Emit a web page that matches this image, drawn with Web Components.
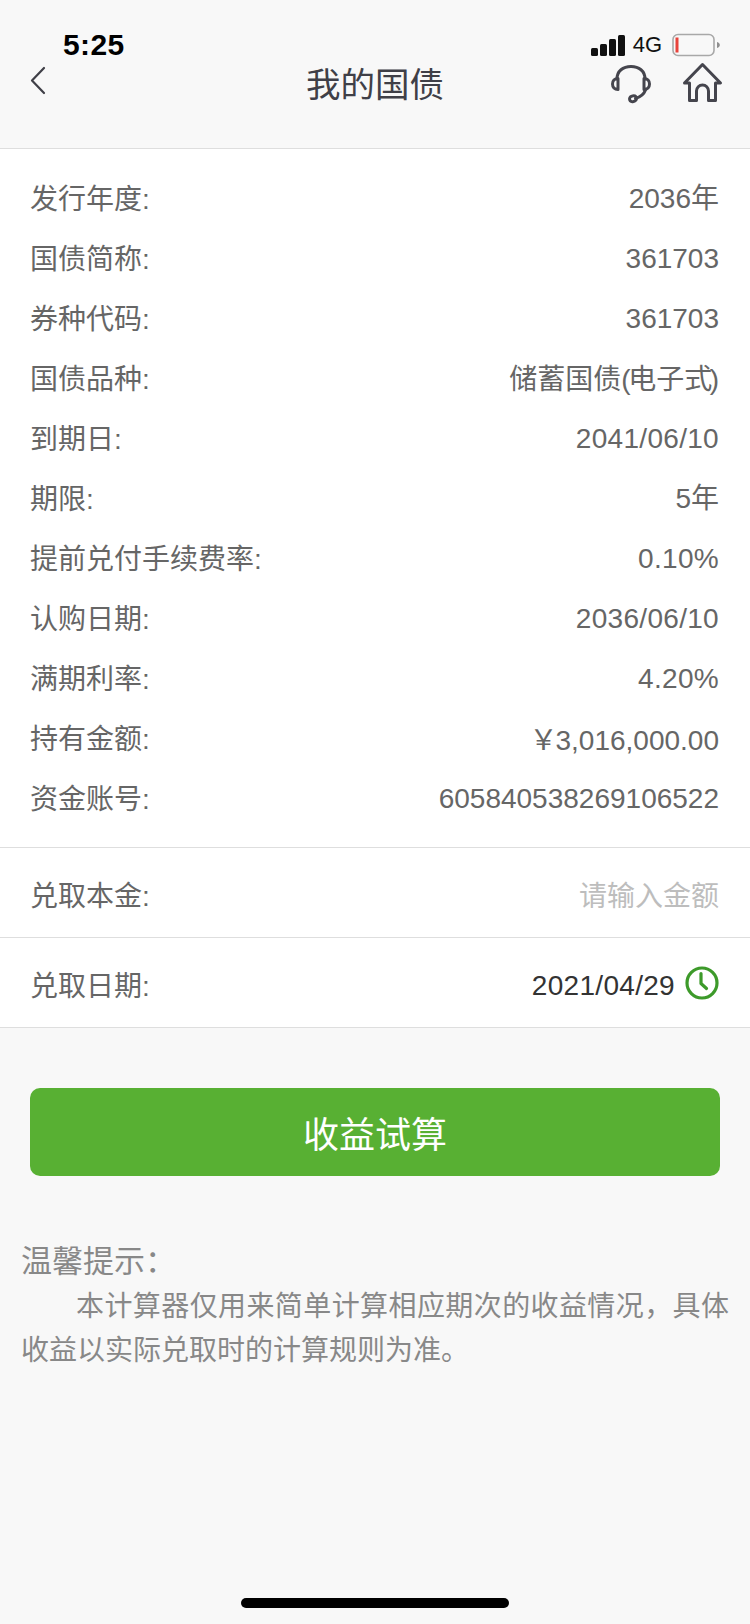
<!DOCTYPE html>
<html lang="zh">
<head>
<meta charset="utf-8">
<title>我的国债</title>
<style>
  html, body { margin: 0; padding: 0; background: #f8f8f8; }
  body {
    width: 750px;
    height: 1624px;
    overflow: hidden;
    display: flex;
    flex-direction: column;
    font-family: "Liberation Sans", "Noto Sans CJK SC", sans-serif;
  }
  .yen { font-family: "Noto Sans CJK SC", sans-serif; margin-right: -2px; }
  .tight { letter-spacing: -2.500px; }
</style>
</head>
<body>
<status-bar time="5:25"></status-bar>
<nav-bar title="我的国债"></nav-bar>
<info-list>
  <info-row label="发行年度:">2036年</info-row>
  <info-row label="国债简称:">361703</info-row>
  <info-row label="券种代码:">361703</info-row>
  <info-row label="国债品种:" cjk>储蓄国债<span class="tight">(</span>电子<span class="tight">式</span>)</info-row>
  <info-row label="到期日:" spaced>2041/06/10</info-row>
  <info-row label="期限:">5年</info-row>
  <info-row label="提前兑付手续费率:" spaced>0.10%</info-row>
  <info-row label="认购日期:" spaced>2036/06/10</info-row>
  <info-row label="满期利率:" spaced>4.20%</info-row>
  <info-row label="持有金额:"><span class="yen">￥</span>3,016,000.00</info-row>
  <info-row label="资金账号:">605840538269106522</info-row>
</info-list>
<form-row label="兑取本金:" placeholder="请输入金额"></form-row>
<form-row label="兑取日期:" value="2021/04/29" clock></form-row>
<main-button>收益试算</main-button>
<tip-note title="温馨提示：">本计算器仅用来简单计算相应期次的收益情况，具体收益以实际兑取时的计算规则为准。</tip-note>
<home-bar></home-bar>

<script>
class StatusBar extends HTMLElement {
  constructor() {
    super();
    this.attachShadow({ mode: "open" });
  }
  connectedCallback() {
    this.shadowRoot.innerHTML = `
    <style>
      :host { display: flex; justify-content: space-between; align-items: center; height: 62px; padding: 28px 30px 0 63px; box-sizing: border-box; color: #000; }
      .time { font-size: 30px; font-weight: 700; line-height: 34px; letter-spacing: .4px; }
      .right { display: flex; align-items: center; }
      .net { font-size: 22px; line-height: 24px; margin: 0 10px 0 8px; color: #111; }
      svg { display: block; }
    </style>
    <span class="time">${this.getAttribute("time")}</span>
    <div class="right">
      <svg width="34" height="22" viewBox="0 0 34 22">
        <rect x="0" y="14" width="7" height="8" rx="1.5" fill="#111"/>
        <rect x="9" y="10" width="7" height="12" rx="1.5" fill="#111"/>
        <rect x="18" y="5" width="7" height="17" rx="1.5" fill="#111"/>
        <rect x="27" y="1" width="7" height="21" rx="1.5" fill="#111"/>
      </svg>
      <span class="net">4G</span>
      <svg width="48" height="24" viewBox="0 0 48 24">
        <rect x="1" y="1.5" width="41" height="21" rx="5" fill="none" stroke="#a8a8a8" stroke-width="1.6"/>
        <rect x="3.500" y="4.500" width="3" height="15" fill="#e8433b"/>
        <path d="M45 9c2 .6 2.800 1.600 2.800 3s-.8 2.400-2.800 3z" fill="#8e8e8e"/>
      </svg>
    </div>`;
  }
}

class NavBar extends HTMLElement {
  constructor() {
    super();
    this.attachShadow({ mode: "open" });
  }
  connectedCallback() {
    this.shadowRoot.innerHTML = `
    <style>
      :host { display: grid; grid-template-columns: 1fr auto 1fr; align-items: flex-start; height: 87px; padding: 0 27px; box-sizing: border-box; border-bottom: 1px solid #dedede; }
      h1 { margin: 0; padding-top: 2px; font-size: 34.500px; font-weight: 400; line-height: 42px; color: #3f3f47; }
      .back { justify-self: start; margin: 4px 0 0 3px; }
      .tools { justify-self: end; display: flex; gap: 29px; }
      svg { display: block; }
    </style>
    <svg class="back" width="16" height="30" viewBox="0 0 16 30"><path d="M14 2 2 14.500 14 27" fill="none" stroke="#3f3f47" stroke-width="2.200" stroke-linecap="round" stroke-linejoin="round"/></svg>
    <h1>${this.getAttribute("title")}</h1>
    <div class="tools">
      <svg width="42" height="42" viewBox="0 0 42 42" fill="none" stroke="#45454d" stroke-width="3" stroke-linecap="round" stroke-linejoin="round">
        <path d="M7 17C7 9 13 4.500 21 4.500S35 9 35 17"/>
        <path d="M8 16.500c-3.500 0-5.500 2.500-5.500 5.500s2 5.500 5.500 5.500z"/>
        <path d="M34 16.500c3.500 0 5.500 2.500 5.500 5.500s-2 5.500-5.500 5.500z"/>
        <path d="M35.500 28c-1.500 4-5 7-10 8.500"/>
        <rect x="19.500" y="34" width="7" height="5.500" rx="2.700" transform="rotate(-20 23 36.700)"/>
      </svg>
      <svg width="42" height="42" viewBox="0 0 42 42" fill="none" stroke="#45454d" stroke-width="3" stroke-linecap="round" stroke-linejoin="round">
        <path d="M8.500 38.500V21H3.500L21.500 2.500 39.500 21H34.500V38.500H27.500V29a6 6 0 0 0-12 0V38.500z"/>
      </svg>
    </div>`;
  }
}

class InfoList extends HTMLElement {
  constructor() {
    super();
    this.attachShadow({ mode: "open" });
    this.shadowRoot.innerHTML = `
    <style>
      :host { display: block; padding: 19px 0; background: #fff; border-bottom: 1px solid #dedede; }
    </style>
    <slot></slot>`;
  }
}

class InfoRow extends HTMLElement {
  constructor() {
    super();
    this.attachShadow({ mode: "open" });
  }
  connectedCallback() {
    this.shadowRoot.innerHTML = `
    <style>
      :host { display: flex; justify-content: space-between; align-items: center; box-sizing: border-box; height: 60px; padding: 2px 31px 0 30px; font-size: 28px; line-height: 40px; color: #666; }
      .label { margin-top: 2px; }
      :host([spaced]) .val { letter-spacing: .3px; }
      :host([cjk]) .val { margin-top: 2px; }
    </style>
    <span class="label">${this.getAttribute("label")}</span>
    <span class="val"><slot></slot></span>`;
  }
}

class FormRow extends HTMLElement {
  constructor() {
    super();
    this.attachShadow({ mode: "open" });
  }
  connectedCallback() {
    const value = this.getAttribute("value");
    const clock = this.hasAttribute("clock") ? `
      <svg width="34" height="34" viewBox="0 0 34 34" fill="none" stroke="#3d9a2a" stroke-width="3.200" stroke-linecap="round" stroke-linejoin="round">
        <circle cx="17" cy="17" r="15"/>
        <path d="M16 7.500v10l5.500 5"/>
      </svg>` : "";
    this.shadowRoot.innerHTML = `
    <style>
      :host { display: flex; justify-content: space-between; align-items: center; box-sizing: border-box; height: 90px; padding: 4px 31px 0 30px; font-size: 28px; line-height: 40px; color: #666; background: #fff; border-bottom: 1px solid #dedede; }
      .right { display: flex; align-items: center; gap: 10px; }
      .label, .ph { margin-top: 4px; }
      .value { margin-top: 2px; color: #333; letter-spacing: .3px; }
      .ph { color: #bdbdbd; }
      svg { display: block; margin-top: -4px; }
    </style>
    <span class="label">${this.getAttribute("label")}</span>
    <div class="right">
      <span class="${value ? "value" : "ph"}">${value || this.getAttribute("placeholder")}</span>${clock}
    </div>`;
  }
}

class MainButton extends HTMLElement {
  constructor() {
    super();
    this.attachShadow({ mode: "open" });
    this.shadowRoot.innerHTML = `
    <style>
      :host { display: flex; align-items: center; justify-content: center; height: 88px; margin: 60px 30px 0; background: #58b033; border-radius: 10px; color: #fff; font-size: 36px; }
    </style>
    <slot></slot>`;
  }
}

class TipNote extends HTMLElement {
  constructor() {
    super();
    this.attachShadow({ mode: "open" });
  }
  connectedCallback() {
    this.shadowRoot.innerHTML = `
    <style>
      :host { display: block; margin-top: 63px; padding: 0 21px; font-size: 28px; line-height: 44px; color: #888; }
      h2 { margin: 0; font-size: 31px; font-weight: 400; line-height: 46px; }
      p { margin: 0; text-indent: 55px; text-align: justify; }
    </style>
    <h2>${this.getAttribute("title")}</h2>
    <p><slot></slot></p>`;
  }
}

class HomeBar extends HTMLElement {
  constructor() {
    super();
    this.attachShadow({ mode: "open" });
    this.shadowRoot.innerHTML = `
    <style>
      :host { display: block; width: 268px; height: 10px; margin: auto auto 16px; border-radius: 5px; background: #000; }
    </style>`;
  }
}

customElements.define("status-bar", StatusBar);
customElements.define("nav-bar", NavBar);
customElements.define("info-list", InfoList);
customElements.define("info-row", InfoRow);
customElements.define("form-row", FormRow);
customElements.define("main-button", MainButton);
customElements.define("tip-note", TipNote);
customElements.define("home-bar", HomeBar);
</script>
</body>
</html>
